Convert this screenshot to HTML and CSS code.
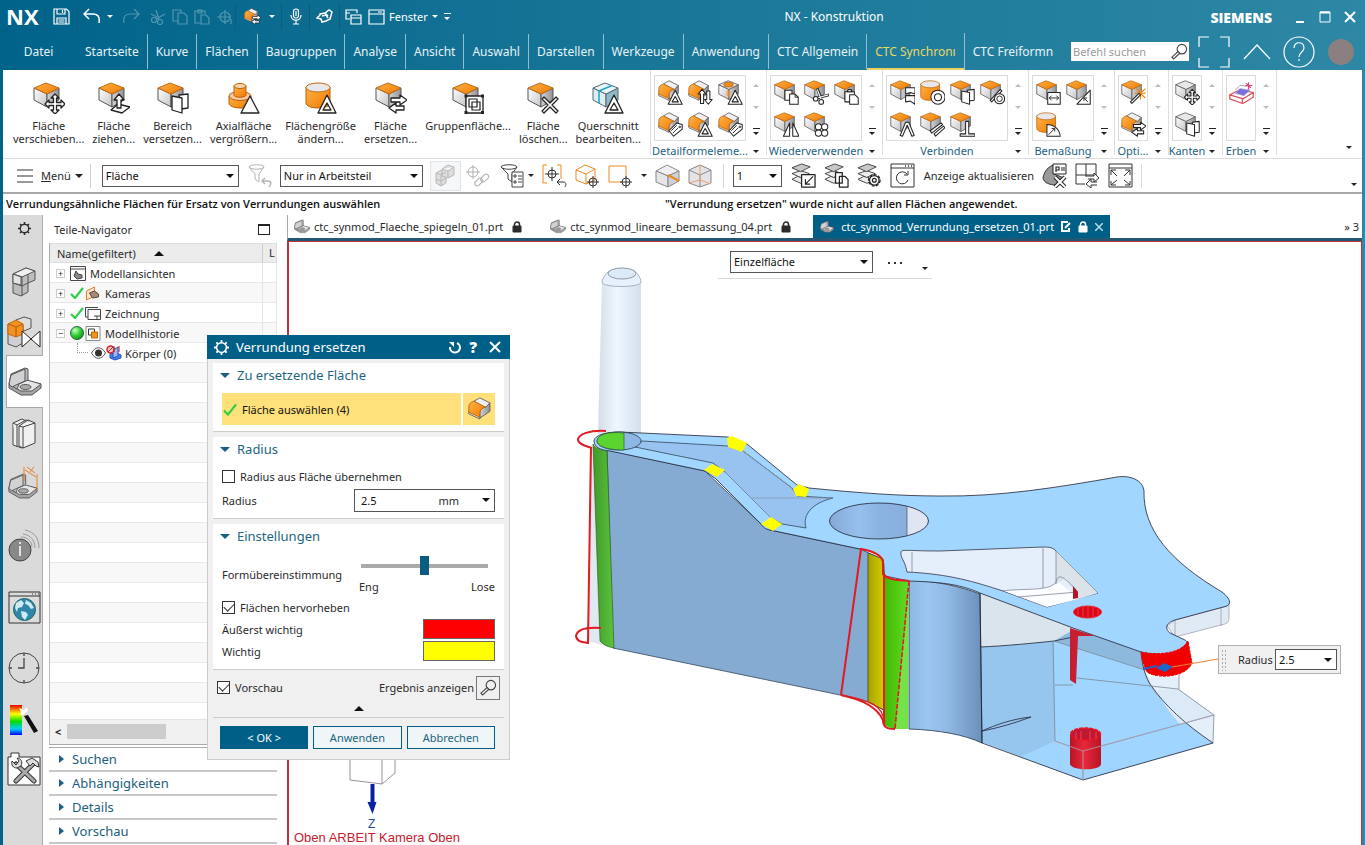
FILE: index.html
```html
<!DOCTYPE html>
<html lang="de">
<head>
<meta charset="utf-8">
<title>NX - Konstruktion</title>
<link rel="stylesheet" href="styles.css">
</head>
<body>
<svg class="defs" width="0" height="0" aria-hidden="true">
  <defs>
    <linearGradient id="gOr" x1="0" y1="0" x2="1" y2="1"><stop offset="0" stop-color="#ffb347"/><stop offset="1" stop-color="#f07800"/></linearGradient>
    <linearGradient id="gGr" x1="0" y1="0" x2="1" y2="1"><stop offset="0" stop-color="#fff"/><stop offset="1" stop-color="#c4c4c8"/></linearGradient>
    <linearGradient id="gDk" x1="0" y1="0" x2="1" y2="0"><stop offset="0" stop-color="#d4d4d8"/><stop offset="1" stop-color="#909096"/></linearGradient>
    <linearGradient id="gRain" x1="0" y1="0" x2="0" y2="1"><stop offset="0" stop-color="#e00"/><stop offset=".3" stop-color="#ff0"/><stop offset=".55" stop-color="#0d0"/><stop offset=".8" stop-color="#0cf"/><stop offset="1" stop-color="#00f"/></linearGradient>
    <radialGradient id="gBall" cx=".35" cy=".3" r=".8"><stop offset="0" stop-color="#c8ffc8"/><stop offset=".5" stop-color="#35d035"/><stop offset="1" stop-color="#0a8a10"/></radialGradient>
    <linearGradient id="mPil" x1="0" y1="0" x2="1" y2="0"><stop offset="0" stop-color="#d5dee8"/><stop offset=".45" stop-color="#eef6ff"/><stop offset="1" stop-color="#d3dfec"/></linearGradient>
    <linearGradient id="mCol" x1="0" y1="0" x2="1" y2="0"><stop offset="0" stop-color="#8cb8e6"/><stop offset=".25" stop-color="#9bc6f0"/><stop offset=".5" stop-color="#92bbe6"/><stop offset="1" stop-color="#6a90ba"/></linearGradient>
    <linearGradient id="mHole" x1="0" y1="0" x2="1" y2="0"><stop offset="0" stop-color="#86a9d6"/><stop offset=".3" stop-color="#97c0ee"/><stop offset=".5" stop-color="#8bb3e2"/><stop offset="1" stop-color="#86aad8"/></linearGradient>
    <linearGradient id="mGrn" x1="0" y1="0" x2="1" y2="0"><stop offset="0" stop-color="#3f9a2a"/><stop offset="1" stop-color="#5cc43c"/></linearGradient>
    <linearGradient id="mGr2" x1="0" y1="0" x2="1" y2="0"><stop offset="0" stop-color="#42b800"/><stop offset="1" stop-color="#62dc28"/></linearGradient>
    <linearGradient id="mYel" x1="0" y1="0" x2="1" y2="0"><stop offset="0" stop-color="#a8a200"/><stop offset="1" stop-color="#d0cc00"/></linearGradient>
    <linearGradient id="mRed" x1="0" y1="0" x2="1" y2="0"><stop offset="0" stop-color="#b81426"/><stop offset=".45" stop-color="#e8283a"/><stop offset="1" stop-color="#b81426"/></linearGradient>
  </defs>
  <symbol id="cube" viewBox="0 0 32 32"><g stroke="#555" stroke-linejoin="round"><path d="M1 6v12l13 7V12z" fill="url(#gGr)"/><path d="M14 12v13l12-7V6z" fill="url(#gDk)"/><path d="M1 6l12-5 13 5-12 6z" fill="url(#gOr)" stroke="#c26a10"/></g></symbol>
  <symbol id="cubeg" viewBox="0 0 32 32"><g stroke="#555" stroke-linejoin="round"><path d="M1 6v12l13 7V12z" fill="url(#gGr)"/><path d="M14 12v13l12-7V6z" fill="url(#gDk)"/><path d="M1 6l12-5 13 5-12 6z" fill="#e8e8ea"/></g></symbol>
  <symbol id="cubet" viewBox="0 0 32 32"><g stroke="#567" stroke-linejoin="round"><path d="M1 6v12l13 7V12z" fill="#dceef2"/><path d="M14 12v13l12-7V6z" fill="#8fb9c4"/><path d="M1 6l12-5 13 5-12 6z" fill="#e8f4f6"/><path d="M7 9l13-5.500M7 9v12" stroke="#1ba6c9" fill="none" stroke-width="1.500"/></g></symbol>
  <symbol id="blend" viewBox="0 0 32 32"><g stroke="#555" stroke-linejoin="round"><path d="M7 5l7-4 12 6-5 6z" fill="#f0f0f2"/><path d="M14 25v-6c0-4 3-7 7-7l5-5v10z" fill="url(#gDk)"/><path d="M1 17v3l13 6v-4z" fill="#eee"/><path d="M1 18v-6c0-4 2-6 6-7l14 7c-5 1-7 4-7 8v4z" fill="url(#gOr)" stroke="#b8620c"/></g></symbol>
  <symbol id="cubehole" viewBox="0 0 32 32"><use href="#cubeg"/><ellipse cx="13.500" cy="6" rx="6" ry="3" fill="#f58a1c" stroke="#b8620c"/><path d="M11 13l5 1v9l-5-3z" fill="#f58a1c" opacity=".6"/></symbol>
  <symbol id="cyl" viewBox="0 0 32 32"><path d="M1 5v16c0 3 5 5 12 5s12-2 12-5V5z" fill="url(#gOr)" stroke="#b8620c"/><ellipse cx="13" cy="5.500" rx="12" ry="4.500" fill="#e8e8ec" stroke="#c26a10"/></symbol>
  <symbol id="stack" viewBox="0 0 32 32"><path d="M1 14v7c0 3 5 5 11 5s11-2 11-5v-7z" fill="url(#gOr)" stroke="#b8620c"/><ellipse cx="12" cy="14" rx="11" ry="4.500" fill="#f6c7a0" stroke="#b8620c"/><path d="M6 4v9c0 3 12 3 12 0V4z" fill="url(#gOr)" stroke="#b8620c"/><ellipse cx="12" cy="4" rx="6" ry="2.500" fill="#fbd3a8" stroke="#b8620c"/></symbol>

  <symbol id="o-move" viewBox="0 0 32 32"><path d="M22 12l4 4h-2.500v4.500H28V18l4 4-4 4v-2.500h-4.500V28H26l-4 4-4-4h2.500v-4.500H16V26l-4-4 4-4v2.500h4.500V16H18z" class="ov"/></symbol>
  <symbol id="o-up" viewBox="0 0 32 32"><path d="M13 28l7-6 12 3-8 6z" class="ov"/><path d="M21 12l5 6h-3v8h-4v-8h-3z" class="ov"/></symbol>
  <symbol id="o-pages" viewBox="0 0 32 32"><path d="M22 13l9-1v14l-7 1z" class="ov"/><path d="M15 14l10 2v15l-10-3z" class="ov"/></symbol>
  <symbol id="o-tri" viewBox="0 0 32 32"><path d="M22 14l9 17H13z" class="ov"/></symbol>
  <symbol id="o-tri2" viewBox="0 0 32 32"><path d="M22 13l9 18H13zM22 21l-4 7h8z" class="ov"/></symbol>
  <symbol id="o-swap" viewBox="0 0 32 32"><path d="M16 16h9v-3l7 5-7 5v-3h-9z" class="ov"/><path d="M29 24h-8v-3l-7 5 7 5v-3h8z" class="ov"/></symbol>
  <symbol id="o-group" viewBox="0 0 32 32"><path d="M14 14h17v17H14z" class="ov"/><path d="M17 17h8v8h-8zM20 20h8v8h-8z" class="ol"/><path d="M12.500 12.500h3v3h-3zM29 12.500h3v3h-3zM12.500 29h3v3h-3zM29 29h3v3h-3z" fill="#222"/></symbol>
  <symbol id="o-x" viewBox="0 0 32 32"><path d="M17 15l6 6 6-6 2 2-6 6 6 6-2 2-6-6-6 6-2-2 6-6-6-6z" class="ov"/></symbol>
  <symbol id="o-updn" viewBox="0 0 32 32"><path d="M18 12l5 6h-3v12h-4V18h-3z" class="ov"/><path d="M26 31l-5-6h3V14h4v11h3z" class="ov"/></symbol>
  <symbol id="o-tag" viewBox="0 0 32 32"><path d="M14 24l10-10 7 2v6L20 31z" class="ov"/><path d="M19 27l7-7M17 24l7-7" class="ol"/><circle cx="28" cy="19" r="1" class="ol"/></symbol>
  <symbol id="o-copy" viewBox="0 0 32 32"><path d="M14 13h9v13h-9z" class="ov"/><path d="M20 18h7l4 4v9H20z" class="ov"/><path d="M27 18v4h4" class="ol"/></symbol>
  <symbol id="o-paste" viewBox="0 0 32 32"><path d="M14 15h12v13H14z" class="ov"/><path d="M17 15c0-4 6-4 6 0z" class="ov"/><path d="M20 19h7l4 4v8H20z" class="ov"/></symbol>
  <symbol id="o-cut" viewBox="0 0 32 32"><path d="M17 11l5 13M32 19l-15 4" stroke="#222" stroke-width="3.500"/><path d="M17 12l5 13M31 19l-14 4" stroke="#fff" stroke-width="1.500"/><circle cx="22" cy="28" r="3" class="ov"/><circle cx="15" cy="24" r="3" class="ov"/></symbol>
  <symbol id="o-mirror" viewBox="0 0 32 32"><path d="M20 14v17h-8zM24 14v17h8z" class="ov"/></symbol>
  <symbol id="o-flower" viewBox="0 0 32 32"><circle cx="18.500" cy="19" r="4" class="ov"/><circle cx="26.500" cy="19" r="4" class="ov"/><circle cx="18.500" cy="27" r="4" class="ov"/><circle cx="26.500" cy="27" r="4" class="ov"/></symbol>
  <symbol id="o-books" viewBox="0 0 32 32"><path d="M20 10h12v8l-6-2-6 2zM20 20h12v11l-6-4-6 1z" class="ov"/></symbol>
  <symbol id="o-ring" viewBox="0 0 32 32"><circle cx="23" cy="22" r="9" class="ov"/><circle cx="23" cy="22" r="4.500" class="ov"/></symbol>
  <symbol id="o-tan" viewBox="0 0 32 32"><path d="M13 26l13-14 2 2-13 14z" class="ov"/><circle cx="25" cy="24" r="6.500" class="ov"/><circle cx="25" cy="24" r="3.500" class="ol"/></symbol>
  <symbol id="o-ang" viewBox="0 0 32 32"><path d="M20 13h4l7 17-3 1-6-14-6 14-3-1z" class="ov"/></symbol>
  <symbol id="o-par" viewBox="0 0 32 32"><path d="M13 24l14-10 2 2-14 11zM18 28l12-10 2 2-12 11z" class="ov"/></symbol>
  <symbol id="o-perp" viewBox="0 0 32 32"><path d="M20 12h4v16h8v3H13v-3h7z" class="ov"/></symbol>
  <symbol id="o-dim" viewBox="0 0 32 32"><path d="M15 16h16v15H15z" class="ov"/><path d="M17 23h12M20 20l-3 3 3 3M26 20l3 3-3 3" class="ol"/></symbol>
  <symbol id="o-dimt" viewBox="0 0 32 32"><path d="M31 13v18H14z" class="ov"/><path d="M28 28l-5-5m0 4v-4h4" class="ol"/></symbol>
  <symbol id="o-dimr" viewBox="0 0 32 32"><path d="M14 31V16c9 0 16 6 17 15z" class="ov"/><path d="M16 29l8-8m-4 0h4v4" class="ol"/></symbol>
  <symbol id="o-wand" viewBox="0 0 32 32"><path d="M25 9v16M17 17h16M19 11l12 12M31 11L19 23" stroke="#f08a10" stroke-width="1.500"/><path d="M12 28l11-11 2 2-11 11z" class="ov"/></symbol>

  <symbol id="stackl" viewBox="0 0 26 26"><g stroke="#444" fill="#ececee" stroke-linejoin="round"><path d="M1 17l6-3 10 2 2 2-9 3z"/><path d="M1 11l9-3 9 3-9 4z"/><path d="M1 5l10-4 9 3-10 5z" fill="#c8c8cc"/></g></symbol>
  <symbol id="bracket" viewBox="0 0 34 30"><g stroke="#555" stroke-linejoin="round"><path d="M1 17v4l12 7h11l9-7v-4l-14-3z" fill="#a4a4a8"/><path d="M1 17l18-4 14 4-9 7H13z" fill="#e6e6e8"/><path d="M1 17l2-10L17 1l3 1v11l-9 4-2 5z" fill="#bcbcc0"/><path d="M3 8L17 2v12L8 18l-4 2-3-3z" fill="#d2d2d5"/><ellipse cx="17.500" cy="20" rx="5.500" ry="2.500" fill="#aaa"/></g></symbol>
  <symbol id="lock" viewBox="0 0 10 12"><path d="M1 5h8v6H1z" fill="currentColor" stroke="currentColor"/><path d="M2.500 5V3.500a2.500 2.500 0 0 1 5 0V5" fill="none" stroke="currentColor" stroke-width="1.500"/></symbol>
  <symbol id="check" viewBox="0 0 14 12"><path d="M1 7l4 4L13 1" fill="none" stroke="#2fcf4a" stroke-width="2.200"/></symbol>
  <symbol id="lens" viewBox="0 0 18 18"><circle cx="11.500" cy="6.500" r="5" fill="none" stroke="#444" stroke-width="1.200"/><path d="M7.500 9l1.800 1.800-6.500 6L1 15z" fill="#fff" stroke="#444" stroke-width="1.200"/></symbol>
  <symbol id="gear" viewBox="0 0 16 16"><circle cx="8" cy="8" r="5.200" fill="none" stroke="currentColor" stroke-width="1.600"/><path d="M8 0v3M8 13v3M0 8h3M13 8h3M2.500 2.500l2 2M11.500 11.500l2 2M2.500 13.500l2-2M11.500 4.500l2-2" stroke="currentColor" stroke-width="2"/></symbol>
</svg>

<div class="app">
  <header class="title-bar">
    <div class="quick">
      <span class="nx">NX</span>
      <button class="qb q-save" aria-label="Speichern"><svg width="17" height="17" viewBox="0 0 17 17" class="wl"><path d="M1 1h12.500L16 3.500V16H1zM4 1v5h8V1M9.500 2v3M4 16v-6h9v6M5.500 12h6M5.500 14h6"/></svg></button>
      <button class="qb q-undo" aria-label="Rückgängig"><svg width="18" height="17" viewBox="0 0 18 17" class="wl b"><path d="M6 1L1 6l5 5M1 6h9c5 0 7 3 6 9"/></svg></button><i class="tri w"></i>
      <button class="qb q-redo dim" aria-label="Wiederholen"><svg width="17" height="17" viewBox="0 0 17 17" class="wl"><path d="M11 1l5 5-5 5M16 6H7c-5 0-7 3-6 9"/></svg></button>
      <button class="qb q-c dim" aria-label="Ausschneiden"><svg width="16" height="16" viewBox="0 0 16 16" class="wl"><circle cx="4" cy="11" r="2.500"/><circle cx="10" cy="13" r="2.500"/><path d="M6 10l9-5M9 11L6 1M1 5l6 3"/></svg></button>
      <button class="qb q-c dim" aria-label="Kopieren"><svg width="16" height="16" viewBox="0 0 16 16" class="wl"><path d="M6 12H1V1h8v3M6 4h6l3 3v8H6z"/></svg></button>
      <button class="qb q-c dim" aria-label="Einfügen"><svg width="16" height="16" viewBox="0 0 16 16" class="wl"><path d="M6 14H1V2h10v3M4 1h4v3H4zM7 6h5l3 3v6H7z"/></svg></button>
      <button class="qb q-c dim" aria-label="Ziel"><svg width="16" height="16" viewBox="0 0 16 16" class="wl"><circle cx="9" cy="8" r="5"/><path d="M9 1v14M1 8h14M15 15v-5"/></svg></button>
      <button class="qb q-rep" aria-label="Fläche ersetzen"><svg width="17" height="17"><use href="#blend"/><use href="#o-swap"/></svg></button><i class="tri w"></i>
      <button class="qb q-mic" aria-label="Mikrofon"><svg width="12" height="17" viewBox="0 0 12 17" class="wl"><rect x="3.500" y="1" width="5" height="9" rx="2.500"/><path d="M1 7c0 7 10 7 10 0M6 12.500V16M3 16h6M6 3v5"/></svg></button>
      <button class="qb q-pen" aria-label="Touch"><svg width="17" height="15" viewBox="0 0 17 15" class="wl b"><path d="M4 5l5-1 4-3 3 2-2 7-4 2-4 1-1-3-4-1 3-3zM6 7l4-1 2 3M9 4l3 3"/></svg></button>
      <button class="qb q-win" aria-label="Fenster wechseln"><svg width="17" height="16" viewBox="0 0 17 16" class="wl"><path d="M5 10H1V1h11v3M1 4h4M6 6h10v9H6zM6 9h10"/></svg></button>
      <button class="qb q-fen"><svg width="17" height="16" viewBox="0 0 17 16" class="wl"><path d="M1 1h15v14H1zM1 5h15M10 3h4"/></svg>Fenster<i class="tri w"></i></button>
      <button class="qb q-more" aria-label="Mehr"><i class="more w"></i></button>
    </div>
    <h1 class="app-title">NX - Konstruktion</h1>
    <span class="siemens">SIEMENS</span>
    <div class="win">
      <button aria-label="Minimieren"><svg width="12" height="14" viewBox="0 0 12 14"><path d="M2 12h8" stroke="#fff" stroke-width="2"/></svg></button>
      <button aria-label="Maximieren"><svg width="12" height="12" viewBox="0 0 12 12"><path d="M1 1h10v10H1z" fill="none" stroke="#fff"/><path d="M1 1.500h10" stroke="#fff" stroke-width="2"/></svg></button>
      <button aria-label="Schließen"><svg width="12" height="12" viewBox="0 0 12 12"><path d="M1 1l10 10M11 1L1 11" stroke="#fff" stroke-width="2"/></svg></button>
    </div>
  </header>

  <nav class="tabs">
    <a class="tab first" href="#">Datei</a><a class="tab" href="#">Startseite</a><a class="tab" href="#">Kurve</a><a class="tab" href="#">Flächen</a><a class="tab" href="#">Baugruppen</a><a class="tab" href="#">Analyse</a><a class="tab" href="#">Ansicht</a><a class="tab" href="#">Auswahl</a><a class="tab" href="#">Darstellen</a><a class="tab" href="#">Werkzeuge</a><a class="tab" href="#">Anwendung</a><a class="tab" href="#">CTC Allgemein</a><a class="tab active" href="#">CTC Synchronı</a><a class="tab last" href="#">CTC Freiformn</a>
    <label class="search"><input type="text" placeholder="Befehl suchen" aria-label="Befehl suchen"><svg width="17" height="17"><use href="#lens"/></svg></label>
    <div class="tools">
      <button aria-label="Vollbild"><svg width="32" height="32" viewBox="0 0 32 32"><path d="M1 11V1h10M22 1h9v10M31 22v9h-9M11 31H1v-9" fill="none" stroke="#fff" stroke-width="1.200"/></svg></button>
      <button aria-label="Einklappen"><svg width="28" height="16" viewBox="0 0 28 16"><path d="M1 15L14 1l13 14" fill="none" stroke="#fff" stroke-width="1.200"/></svg></button>
      <button aria-label="Hilfe" class="help"><svg width="32" height="32" viewBox="0 0 32 32" fill="none" stroke="#fff" stroke-width="1.200"><circle cx="16" cy="16" r="15"/><path d="M11 12c0-7 10-7 10 0 0 4-5 4-5 9M16 23v2"/></svg></button>
      <button aria-label="Benutzer" class="user"></button>
    </div>
  </nav>

  <div class="sheet">
    <section class="ribbon">
      <div class="bigs">
        <button><svg width="32" height="32"><use href="#cube"/><use href="#o-move"/></svg>Fläche<br>verschieben...</button>
        <button><svg width="32" height="32"><use href="#cube"/><use href="#o-up"/></svg>Fläche<br>ziehen...</button>
        <button><svg width="32" height="32"><use href="#cube"/><use href="#o-pages"/></svg>Bereich<br>versetzen...</button>
        <button><svg width="32" height="32"><use href="#stack"/><use href="#o-tri"/></svg>Axialfläche<br>vergrößern...</button>
        <button><svg width="32" height="32"><use href="#cyl"/><use href="#o-tri2"/></svg>Flächengröße<br>ändern...</button>
        <button><svg width="32" height="32"><use href="#cube"/><use href="#o-swap"/></svg>Fläche<br>ersetzen...</button>
        <button><svg width="32" height="32"><use href="#cube"/><use href="#o-group"/></svg>Gruppenfläche...</button>
        <button><svg width="32" height="32"><use href="#cube"/><use href="#o-x"/></svg>Fläche<br>löschen...</button>
        <button><svg width="32" height="32"><use href="#cubet"/><use href="#o-tri2"/></svg>Querschnitt<br>bearbeiten...</button>
      </div>
      <div class="grp"><div class="gal c3"><svg><use href="#blend"/><use href="#o-tri2"/></svg><svg><use href="#blend"/><use href="#o-updn"/></svg><svg><use href="#cubehole"/><use href="#o-tri2"/></svg><svg><use href="#blend"/><use href="#o-tag"/></svg><svg><use href="#blend"/><use href="#o-tri2"/></svg><svg><use href="#blend"/><use href="#o-tag"/></svg></div><div class="scr"><i class="up"></i><i class="dn"></i><i class="more"></i></div><span class="gl">Detailformeleme...</span><i class="tri"></i></div>
      <div class="grp"><div class="gal c3"><svg><use href="#cube"/><use href="#o-copy"/></svg><svg><use href="#cube"/><use href="#o-cut"/></svg><svg><use href="#cube"/><use href="#o-paste"/></svg><svg><use href="#cube"/><use href="#o-mirror"/></svg><svg><use href="#cube"/><use href="#o-flower"/></svg></div><div class="scr"><i class="up"></i><i class="dn"></i><i class="more"></i></div><span class="gl">Wiederverwenden</span><i class="tri"></i></div>
      <div class="grp"><div class="gal c4"><svg><use href="#cube"/><use href="#o-books"/></svg><svg><use href="#cyl"/><use href="#o-ring"/></svg><svg><use href="#cube"/><use href="#o-pages"/></svg><svg><use href="#cube"/><use href="#o-tan"/></svg><svg><use href="#cube"/><use href="#o-ang"/></svg><svg><use href="#cube"/><use href="#o-par"/></svg><svg><use href="#cube"/><use href="#o-perp"/></svg></div><div class="scr"><i class="up"></i><i class="dn"></i><i class="more"></i></div><span class="gl">Verbinden</span><i class="tri"></i></div>
      <div class="grp"><div class="gal c2"><svg><use href="#cube"/><use href="#o-dim"/></svg><svg><use href="#cube"/><use href="#o-dimt"/></svg><svg><use href="#cyl"/><use href="#o-dimr"/></svg></div><div class="scr"><i class="up"></i><i class="dn"></i><i class="more"></i></div><span class="gl">Bemaßung</span><i class="tri"></i></div>
      <div class="grp"><div class="gal c1"><svg><use href="#cube"/><use href="#o-wand"/></svg><svg><use href="#blend"/><use href="#o-swap"/></svg></div><div class="scr"><i class="up"></i><i class="dn"></i><i class="more"></i></div><span class="gl">Opti...</span><i class="tri"></i></div>
      <div class="grp"><div class="gal c1"><svg><use href="#cubeg"/><use href="#o-move"/></svg><svg><use href="#cubeg"/><use href="#o-pages"/></svg></div><div class="scr"><i class="up"></i><i class="dn"></i><i class="more"></i></div><span class="gl">Kanten</span><i class="tri"></i></div>
      <div class="grp"><div class="gal c1"><svg viewBox="0 0 32 32"><path d="M1 19l12-6 18 3-13 8zM1 19v5l16 6V24M31 16v6l-13 8" fill="#fff" stroke="#e04858" stroke-width="1.500"/><path d="M8 17l6-6 13 2-8 7z" fill="#7870d8" stroke="#a8a4e0"/><path d="M8 13l6-6 10 1" fill="none" stroke="#888"/><path d="M25 3v9M21 7h9M22 4l6 6" stroke="#e04070" stroke-width="1.500"/></svg></div><div class="scr"><i class="up"></i><i class="dn"></i><i class="more"></i></div><span class="gl">Erben</span><i class="tri"></i></div>
      <i class="tri end"></i>
    </section>

    <section class="bar">
      <button class="menu"><svg width="16" height="14" viewBox="0 0 16 14"><path d="M0 1h16M0 7h16M0 13h16" stroke="#333"/></svg><span><u>M</u>enü</span><i class="tri"></i></button>
      <span class="sel w-a"><select aria-label="Typfilter"><option>Fläche</option></select></span>
      <button class="tb first" aria-label="Filter zurücksetzen"><svg width="24" height="24" viewBox="0 0 24 24" fill="none" stroke="#b4b4b4"><path d="M1 3c0-3 15-3 15 0L11 10v8l-4-3v-5zM1 3c2 3 13 3 15 0"/><path d="M17 14l-3 3 3 3M14 17h6c4 0 3 4 1 6" stroke-width="1.500"/></svg></button>
      <span class="sel w-b"><select aria-label="Auswahlbereich"><option>Nur in Arbeitsteil</option></select></span>
      <button class="tb pale" aria-label="Baugruppe"><svg width="20" height="24" viewBox="0 0 20 24" fill="#dedede" stroke="#b8b8b8"><path d="M1 9l6-3 4 2v11l-5 3-5-3z"/><path d="M7 5l6-4 6 2v8l-6 3-6-2zM1 9l5 2 5-3M6 11v11M7 5l6 2 6-4M13 7v7M1 15l5 2 5-3"/></svg></button>
      <button class="tb link" aria-label="Verknüpfung"><svg width="25" height="24" viewBox="0 0 25 24" fill="none" stroke="#b0b0b0"><circle cx="8" cy="8" r="5"/><path d="M8 1v14M1 8h14"/><rect x="9" y="16" width="9" height="5" rx="2.500" transform="rotate(-45 13 18)"/><rect x="15" y="12" width="9" height="5" rx="2.500" transform="rotate(-45 19 14)"/></svg></button>
      <button class="tb" aria-label="Filterliste"><svg width="24" height="24" viewBox="0 0 24 24" fill="#fff" stroke="#444"><path d="M1 3c0-3 16-3 16 0l-5 7v8l-4-3v-5zM1 3c2 3 14 3 16 0"/><path d="M12 8h11v15H12z"/><path d="M14 11h2v2h-2zM14 17h2v2h-2zM18 12h4M18 15h4M18 18h4"/></svg><i class="tri"></i></button>
      <button class="tb" aria-label="Auswahl zurück"><svg width="25" height="24" viewBox="0 0 25 24" fill="none" stroke="#333"><path d="M5 1H1v18h4M15 1h4v14" stroke="#f08a20"/><circle cx="10" cy="10" r="4"/><path d="M10 3v14M3 10h14"/><path d="M18 15l-3 3 3 3M15 18h6c4 0 3 3 2 5"/></svg></button>
      <button class="tb" aria-label="Volumenauswahl"><svg width="25" height="24" viewBox="0 0 25 24" fill="none"><path d="M1 6l9-5 10 4v11l-9 4-10-4zM1 6l10 4 9-5M11 10v10" stroke="#e88a20"/><circle cx="18" cy="18" r="4" stroke="#333"/><path d="M18 12v12M12 18h12" stroke="#333"/></svg></button>
      <button class="tb" aria-label="Rechteckauswahl"><svg width="25" height="24" viewBox="0 0 25 24" fill="none"><path d="M1 2h17v16H1z" stroke="#e88a20"/><circle cx="18" cy="18" r="4" fill="#fff" stroke="#333"/><path d="M18 12v12M12 18h12" stroke="#333"/></svg><i class="tri wide-l"></i></button>
      <button class="tb" aria-label="Kante"><svg width="25" height="24" viewBox="0 0 25 24" stroke="#888"><path d="M1 7l11-6 12 6-11 5z" fill="#f0f0f2"/><path d="M1 7v11l12 5V12z" fill="#e6e6ea"/><path d="M13 12v11l11-6V7z" fill="#d0d0d6"/><path d="M13 11l11 6" stroke="#e88a20" stroke-width="2"/></svg></button>
      <button class="tb" aria-label="Kante innen"><svg width="25" height="24" viewBox="0 0 25 24" stroke="#888"><path d="M1 6l11-5 11 5v13l-11 4-11-4z" fill="#e4e4e8"/><path d="M1 6l11 5 11-5M12 11v12" fill="none"/><path d="M12 1v15l11 4M12 16L1 19" fill="none" stroke="#e8a070"/></svg></button>
      <i class="vsep lead"></i>
      <span class="sel w-c"><select aria-label="Layer"><option>1</option></select></span>
      <button class="tb" aria-label="Layereinstellungen"><svg width="25" height="25" viewBox="0 0 26 26"><use href="#stackl"/><path d="M11 12h14v13H11z" class="ov"/><path d="M23 14l-8 8m0-5v5h5" class="ol"/></svg></button>
      <button class="tb" aria-label="Layer kopieren"><svg width="25" height="25" viewBox="0 0 26 26"><use href="#stackl"/><path d="M12 10h7v11h-7zM16 14h6l3 3v8h-9z" class="ov"/></svg></button>
      <button class="tb" aria-label="Layer konfigurieren"><svg width="25" height="25" viewBox="0 0 26 26"><use href="#stackl"/><circle cx="18" cy="18" r="6" class="ov" stroke-dasharray="3 1.500"/><circle cx="18" cy="18" r="5" class="ov"/><circle cx="18" cy="18" r="2" class="ov"/></svg></button>
      <button class="tb upd"><svg width="25" height="25" viewBox="0 0 25 25" fill="none" stroke="#333"><path d="M1 1h23v23H1zM1 5h23"/><path d="M15 3h1M18 3h1M21 3h1" stroke-width="1.500"/><path d="M17 11a6 6 0 1 0 1 6M18 8v4h-4"/></svg>Anzeige aktualisieren</button>
      <button class="tb" aria-label="Ausdruck löschen"><svg width="25" height="25" viewBox="0 0 25 25"><path d="M1 15c1-7 6-12 11-13v9l10 4-8 7c-6 0-12-2-13-7z" fill="#999" stroke="#333"/><path d="M11 1h13v10H11z" fill="#fff" stroke="#222"/><path d="M14 9V4h3v3h-3M19 5h4M19 7h4" class="ol"/><path d="M13 14l10 10M23 14L13 24" stroke="#222" stroke-width="4"/><path d="M13 14l10 10M23 14L13 24" stroke="#fff" stroke-width="2"/></svg></button>
      <button class="tb" aria-label="Layout"><svg width="25" height="25" viewBox="0 0 25 25" fill="none" stroke="#333"><path d="M11 1v13M1 12h20V1H1v20h9"/><path d="M11 13h8v-3l5 5-5 4v-3h-6M22 19h-6v-3l-5 5 5 4v-3h6" fill="#fff"/></svg></button>
      <button class="tb" aria-label="Einpassen"><svg width="25" height="25" viewBox="0 0 25 25" fill="none" stroke="#333"><path d="M1 1h23v23H1zM1 5h23M3 12V7h5M3 7l6 6M22 12V7h-5M22 7l-6 6M3 18v4h5M3 22l6-5M22 18v4h-5M22 22l-6-5"/></svg></button>
      <i class="vsep"></i>
      <i class="tri end"></i>
    </section>

    <div class="msg"><strong>Verrundungsähnliche Flächen für Ersatz von Verrundungen auswählen</strong><strong>"Verrundung ersetzen" wurde nicht auf allen Flächen angewendet.</strong></div>

    <main class="work">
      <aside class="res">
        <button class="h-40" aria-label="Einstellungen"><svg width="13" height="13"><use href="#gear"/></svg></button>
        <button class="h-53" aria-label="Baugruppen-Navigator"><svg width="24" height="30" viewBox="0 0 24 30" stroke="#555" stroke-linejoin="round"><path d="M1 7l13-6 9 3v9l-7 3v9l-7 4-8-3z" fill="#bdbdc0"/><path d="M1 7l13-6 9 3-13 6z" fill="#f0f0f0"/><path d="M1 7l9 3v19M1 16l9 3 6-3M16 7v9" fill="none"/><path d="M1 7l8 3v8l-8-2z" fill="#e4e4e6"/></svg></button>
        <button class="h-47" aria-label="Zwangsbedingungen"><svg width="34" height="32" viewBox="0 0 34 32" stroke="#555" stroke-linejoin="round"><path d="M9 4l8-3 7 2v9l-7 3z" fill="#ddd"/><path d="M1 8v20l8 3 7-4V9z" fill="#d0d0d3"/><path d="M1 8l8-4 7 4-7 3zM1 8v10l8 3V11zM9 11v10l7-3V8z" fill="#f59120" stroke="#c26a10"/><path d="M15 15v16l9-8 9 8V15l-9 8z" fill="#fff" stroke="#222"/></svg></button>
        <button class="h-53 on" aria-label="Teile-Navigator"><svg width="34" height="32"><use href="#bracket"/></svg></button>
        <button class="h-50" aria-label="Bibliothek"><svg width="24" height="32" viewBox="0 0 24 32" stroke="#444" fill="#f0f0f0" stroke-linejoin="round"><path d="M1 6l9-4 4 2v24l-4 3-9-3z"/><path d="M5 8l9-5 3 1M1 6l4 2v22M7 9l9-6 7 3v20l-12 5-4-2z"/><path d="M7 9l4 1v21M11 10l12-4" fill="none"/></svg></button>
        <button class="h-50" aria-label="PMI"><svg width="32" height="34" viewBox="0 0 32 34"><svg y="7" width="30" height="27"><use href="#bracket"/></svg><path d="M16 1v14M29 8v16M17 4l11 7M19 1l8 6M26 1l-4 5" stroke="#e8802a" fill="none"/></svg></button>
        <button class="h-76" aria-label="Info"><svg width="32" height="34" viewBox="0 0 32 34"><circle cx="12" cy="21" r="11" fill="#888" stroke="#444"/><path d="M12 17v10M12 13v2" stroke="#fff" stroke-width="1.500"/><path d="M15 5c8 1 12 7 12 14M17 1c10 2 14 9 14 18M13 8c6 0 11 4 11 10" fill="none" stroke="#999"/></svg></button>
        <button class="h-46" aria-label="Browser"><svg width="33" height="33" viewBox="0 0 33 33"><path d="M1 1h31v31H1z" fill="#dcdcdc" stroke="#333"/><path d="M1 5h31M24 3h1M27 3h1M30 3h1" stroke="#333"/><circle cx="16.500" cy="18.500" r="11" fill="#2f87a8" stroke="#266"/><path d="M8 12l5-3 3 3-2 4-4 1-1 4-2-4zM18 9l5 3 3 5-3 1-3-4-3-1zM13 20l5 1 2 3-3 5-3-3z" fill="#cfeaf4"/></svg></button>
        <button class="h-76" aria-label="Historie"><svg width="32" height="32" viewBox="0 0 32 32" fill="none" stroke="#444"><circle cx="16" cy="16" r="15"/><path d="M16 1v3M16 28v3M1 16h3M28 16h3M16 6v10h-6" stroke-width="1.300"/></svg></button>
        <button class="h-28" aria-label="Rollen"><svg width="30" height="32" viewBox="0 0 30 32"><path d="M1 1h12v30H1z" fill="url(#gRain)"/><path d="M15 12l4-1 10 16-4 2z" fill="#111"/><path d="M14 11l5-4-1-4-3 3-5-2 2 4-1 3z" fill="#fff"/></svg></button>
        <button class="h-70" aria-label="Werkzeuge"><svg width="34" height="34" viewBox="0 0 34 34"><path d="M1 5h3V1h8v4h21v28H1z" fill="#fff" stroke="#333"/><path d="M9 12l18 17M26 12L9 29" stroke="#333" stroke-width="5" stroke-linecap="round"/><path d="M9 12l18 17M26 12L9 29" stroke="#aaa" stroke-width="3" stroke-linecap="round"/><path d="M5 9l4 4 3-4-2-3c4 0 6 4 4 8l-4 2c-4 0-6-3-5-7zM19 9l6-3 6 4 1 5-3-1-3-3-3 3z" fill="#ddd" stroke="#333"/></svg></button>
      </aside>

      <section class="nav">
        <div class="nav-title">Teile-Navigator<button aria-label="Maximieren"></button></div>
        <div class="nav-head"><span>Name(gefiltert)<i class="tri upb"></i></span><b>L</b></div>
        <ul class="tree">
          <li><i class="pm">+</i><svg width="16" height="15" viewBox="0 0 16 15"><path d="M.5.500h15v14H.5zM.5 3h15" fill="#fff" stroke="#444"/><path d="M4 10l2-5 2 3 4 1v3l-5 1z" fill="#888" stroke="#444"/></svg>Modellansichten</li>
          <li><i class="pm">+</i><svg width="14" height="12"><use href="#check"/></svg><svg width="16" height="15" viewBox="0 0 15 15"><path d="M1 5l8-4v9l-8 4z" fill="#fbe3cc" stroke="#e08030"/><path d="M4 7l5-2 4 3v3l-6 1z" fill="#a98a78" stroke="#543"/></svg>Kameras</li>
          <li><i class="pm">+</i><svg width="14" height="12"><use href="#check"/></svg><svg width="16" height="13" viewBox="0 0 16 13" fill="#fff" stroke="#444"><path d="M.5 2V.500H13M.5 2v8H3M3 2.500h12.500v10H3zM9 9h6M12 9v3"/></svg>Zeichnung</li>
          <li><i class="pm">−</i><svg width="14" height="14" viewBox="0 0 14 14"><circle cx="7" cy="7" r="6.500" fill="url(#gBall)" stroke="#264"/></svg><svg width="16" height="15" viewBox="0 0 15 15"><path d="M.5.500h14v14H.5z" fill="#fff" stroke="#888"/><path d="M3 3h6v6H3z" fill="#fff" stroke="#333"/><path d="M6 6h6v6H6z" fill="#f59120" stroke="#b60"/></svg>Modellhistorie</li>
          <li class="sub"><i class="dots"></i><svg width="15" height="12" viewBox="0 0 15 12"><path d="M.5 6c4-7 10-7 14 0-4 7-10 7-14 0z" fill="#fff" stroke="#555"/><circle cx="7.500" cy="6" r="3.500" fill="#333"/></svg><svg width="16" height="16" viewBox="0 0 16 16"><path d="M4 9l5-2 6 3v3l-6 2-5-2z" fill="#4a7be0" stroke="#25c"/><path d="M7 5l5-3v9l-5 2z" fill="#9ab6f0" stroke="#25c"/><circle cx="4.500" cy="4.500" r="3.500" fill="#f4c4c4" stroke="#d22" stroke-width="1.500"/><path d="M2 7l5-5M8 1v6M13 1v6" stroke="#a22"/></svg>Körper (0)</li>
        </ul>
        <div class="hscroll"><span>&lt;</span><i></i></div>
        <div class="acc"><button>Suchen</button><button>Abhängigkeiten</button><button>Details</button><button>Vorschau</button></div>
      </section>

      <section class="gfx">
        <div class="files">
          <button class="ft"><svg width="16" height="15"><use href="#bracket"/></svg>ctc_synmod_Flaeche_spiegeln_01.prt<svg class="lk" width="10" height="12"><use href="#lock"/></svg></button>
          <button class="ft"><svg width="16" height="15"><use href="#bracket"/></svg>ctc_synmod_lineare_bemassung_04.prt<svg class="lk" width="10" height="12"><use href="#lock"/></svg></button>
          <button class="ft cur"><svg width="14" height="14"><use href="#bracket"/></svg>ctc_synmod_Verrundung_ersetzen_01.prt<svg width="10" height="11" viewBox="0 0 10 11"><path d="M7 1H1v9h7V7" fill="none" stroke="#fff" stroke-width="2"/><path d="M4 7l5-5" stroke="#fff" stroke-width="2"/></svg><svg width="10" height="12"><use href="#lock"/></svg><svg width="8" height="8" viewBox="0 0 8 8"><path d="M0 0l8 8M8 0L0 8" stroke="#b8dce8" stroke-width="1.500"/></svg></button>
          <span class="cnt">» 3</span>
        </div>
        <div class="view">
          <svg class="scene" viewBox="289 242 1072 603" preserveAspectRatio="xMinYMin slice" width="1072" height="603">
            <path d="M602 281L598 434H641V281z" fill="url(#mPil)"/>
            <path d="M602 282c0-4 6-11 8-11 4-3 20-3 24 0 2 0 7 7 7 11 0 6-39 6-39 0z" fill="#e6f1fc" stroke="#8b95a0" stroke-width=".7"/>
            <ellipse cx="622" cy="273.500" rx="14" ry="5.500" fill="#dce9f6" stroke="#7b8590" stroke-width=".8"/>
            <path d="M590 447L588 641 602 645 594 447z" fill="#e0e8f0"/>
            <path d="M980 593L1095 634 1141 652 1143 672 1000 690 980 660z" fill="#dae4ec"/>
            <path d="M980 647C1005 646 1035 643 1053 641L1078 635 1100 636 1141 652C1142 663 1144 671 1150 684 1165 706 1185 724 1213 743L1083 780 981 742z" fill="#96c5ee"/>
            <path d="M1054 641L1145 670C1144 678 1150 688 1157 696L1214 743 1083 780 1020 757 1055 741z" fill="#9fd5ff"/>
            <path d="M1054 641L1073 630 1100 636 1141 652 1144 669z" fill="#8db9df"/>
            <path d="M1144 670L1148 677H1179V689L1214 715 1213 743C1185 724 1165 706 1150 684z" fill="#e4effa"/>
            <path d="M1157 690L1178 689 1214 715 1180 724C1170 713 1163 704 1157 690z" fill="#dceaf7"/>
            <path d="M1167 626L1175 620 1227 606 1229 602V617C1229 622 1227 624 1221 625L1175 637z" fill="#e0eaf4" stroke="#889" stroke-width=".6"/>
            <path d="M1175 620v17M1221 608v18" stroke="#889" stroke-width=".6"/>
            <path d="M909 580C935 581 960 586 980 594L982 743C965 735 940 730 909 729z" fill="url(#mCol)" stroke="#234" stroke-width=".8"/>
            <path d="M607 450L705 471 762 525 770 530 860 549 884 560V710L868 702 840 695 613 648z" fill="#86abd3" stroke="#345" stroke-width=".8"/>
            <path d="M594 441C594 436 604 432 620 432L728 437 747 444 797 485 809 488C860 493 900 496 940 496 1000 497 1060 487 1117 477 1130 475 1143 480 1144 491 1143 530 1170 561 1222 592 1231 599 1231 604 1227 606L1175 620C1165 623 1165 629 1170 633L1185 640C1192 644 1180 653 1168 654 1157 655 1150 654 1141 652L1073 628 980 593C960 584 940 582 909 581L885 576C883 572 885 566 883 560 880 553 870 551 860 549L770 530C765 529 763 527 761 524L716 479 705 471 610 451C600 450 594 447 594 441z" fill="#a0d6ff" stroke="#223" stroke-width=".8"/>
            <path d="M635 447L642 441 728 446 743 451 792 488 797 496 833 498C812 503 802 515 806 528L782 524 771 518 725 472 713 463z" fill="#98c3f0" stroke="#234" stroke-width=".7"/>
            <path d="M725 472L771 518M743 451L792 488M752 498L833 498" stroke="#89a" stroke-width=".8"/>
            <ellipse cx="619" cy="441" rx="22" ry="9" fill="#8eb7e4" stroke="#234" stroke-width=".8"/>
            <path d="M624 433C605 431 597 436 597 441S607 450 624 450z" fill="#5bd42f" stroke="#252" stroke-width=".6"/>
            <path d="M593 444C595 448 600 450 607 451L614 648C608 647 603 645 600 641z" fill="url(#mGrn)" stroke="#252" stroke-width=".6"/>
            <path d="M727 438l5-2 15 7-5 9-14-5zM704 470l8-6 13 6-8 7zM793 489l6-5 10 5-3 8-10-1zM761 524l10-7 11 7-9 7z" fill="#ff0"/>
            <ellipse cx="879" cy="521" rx="49.500" ry="18" fill="url(#mHole)"/>
            <path d="M907 506C935 513 935 529 907 536z" fill="#dfe6f1"/>
            <ellipse cx="879" cy="521" rx="49.500" ry="18" fill="none" stroke="#223" stroke-width=".8"/><path d="M907 506v30" stroke="#456" stroke-width=".7"/>
            <path d="M901 552C902 549 908 551 940 551L1043 547C1050 547 1054 548 1056 551L1098 593 1047 607 1003 591C975 582 950 574 907 572 905 560 900 558 901 552z" fill="#e5effb" stroke="#334" stroke-width=".8"/>
            <path d="M1056 551L1098 593 1079 599 1066 578 1056 584z" fill="#dae2ea"/>
            <path d="M1004 591L1043 588 1060 583 1079 599 1047 607z" fill="#fbfdff"/>
            <path d="M1043 548v40M1056 551v33M912 552v20M1003 591C1020 588 1050 592 1056 582 1058 574 1062 574 1078 592M1018 597L1078 592" fill="none" stroke="#778" stroke-width=".7"/>
            <path d="M868 553L883 559 884 576V710L868 702z" fill="url(#mYel)" stroke="#332" stroke-width=".7"/>
            <path d="M884 576C890 579 900 580 909 581L908 729 892 729 884 725z" fill="#74e34a"/>
            <path d="M884 576C890 579 900 580 909 581L895 729 884 725z" fill="url(#mGr2)"/>
            <g fill="none" stroke="#e21a22" stroke-width="2"><path d="M606 431C590 430 578 434 578 440 579 445 586 446 592 448M591 447L588 642M601 628C586 627 577 630 576 636 577 642 582 642 589 643"/><path d="M841 695L861 549C872 551 882 555 883 562V574C888 580 899 580 909 581M841 695C865 700 878 709 883 720 883 728 888 729 895 729M884 576V725"/><path d="M841 695C870 700 884 706 884 722" stroke-width="1.200"/><path d="M909 581L895 729" stroke-dasharray="5 1.500" stroke-width="1.600"/></g>
            <path d="M980 593L982 743M980 647C1005 646 1035 643 1054 641L1078 636M982 743L1083 780 1213 743C1185 724 1165 706 1150 684 1143 672 1142 660 1141 652M982 731C995 725 1012 719 1031 717 1015 723 998 728 982 731" fill="none" stroke="#223" stroke-width=".8"/>
            <path d="M1053 641L1055 741 1083 751 1214 715 1178 689 1077 678M1054 641L1145 670H1157M1055 685H1073M1083 751V780M1179 674V689M1214 715L1213 743" fill="none" stroke="#7a8896" stroke-width=".8"/>
            <path d="M1070 628L1095 636 1078 636 1076 684 1070 680z" fill="#c71f32"/><path d="M1073 586L1078 592V598L1073 599z" fill="#b51428"/>
            <ellipse cx="1087.500" cy="612" rx="14" ry="6" fill="#d8081c" stroke="#e22" stroke-width="1"/><path d="M1078 608v7M1083 607v10M1088 606v11M1093 607v10M1098 609v6" stroke="#f44" stroke-width=".8"/>
            <path d="M1070 734V764C1071 771 1101 771 1101 764V734z" fill="url(#mRed)"/><ellipse cx="1085.500" cy="734" rx="15" ry="6" fill="#c01830" stroke="#f01020" stroke-width="1.500" stroke-dasharray="4 1"/><path d="M1076 732v7M1081 731v9M1090 731v9M1096 732v7" stroke="#ea4050"/><path d="M1055 741L1083 751 1214 715M1083 751V780" fill="none" stroke="#b0a4b4" stroke-width=".8"/>
            <path d="M1141 652C1155 655 1180 655 1188 641L1192 663C1186 678 1156 679 1147 672 1144 666 1142 660 1141 652z" fill="#f00000" stroke="#f00000" stroke-dasharray="3 1"/>
            <path d="M1143 669L1157 666" stroke="#2a5fb8" stroke-width="2"/><path d="M1156 668l8-5 9 4-8 5z" fill="#1e66c8"/><path d="M1172 667L1218 659" stroke="#e8843a" stroke-width="1.200"/>
            <path d="M350 755V780L382 784 395 773V755M382 755V784" fill="none" stroke="#9a8f9e"/>
            <path d="M370.500 784h4v18h2l-4 12-5-12h3z" fill="#0a22a0"/>
            <text x="368" y="828" class="ax">Z</text>
            <text x="294" y="842" class="cam">Oben ARBEIT Kamera Oben</text>
          </svg>
          <div class="float"><span class="sel w-d"><select aria-label="Flächenregel"><option>Einzelfläche</option></select></span><button aria-label="Mehr"><svg width="16" height="3" viewBox="0 0 16 3"><path d="M1 1h2v2H1zM7 1h2v2H7zM13 1h2v2h-2z" fill="#333"/></svg></button><i class="tri"></i></div>
          <div class="mini"><i class="grip"></i><label for="r2">Radius</label><span class="sel w-e"><input id="r2" type="text" value="2.5"></span></div>
        </div>
      </section>
    </main>
  </div>

  <form class="dlg" role="dialog" aria-label="Verrundung ersetzen">
    <div class="dh"><svg width="15" height="15"><use href="#gear"/></svg><h2>Verrundung ersetzen</h2><button type="button" aria-label="Zurücksetzen"><svg width="13" height="13" viewBox="0 0 13 13"><path d="M9 2a5 5 0 1 1-7 4" fill="none" stroke="#fff" stroke-width="2"/><path d="M1 1h5v5z" fill="#fff"/></svg></button><button type="button" aria-label="Hilfe" class="qm">?</button><button type="button" aria-label="Schließen"><svg width="12" height="12" viewBox="0 0 12 12"><path d="M1 1l10 10M11 1L1 11" stroke="#fff" stroke-width="2"/></svg></button></div>
    <fieldset class="s1"><h3>Zu ersetzende Fläche</h3>
      <div class="pick"><button type="button" class="p1"><svg width="14" height="13"><use href="#check"/></svg>Fläche auswählen (4)</button><button type="button" class="p2" aria-label="Verrundung"><svg width="27" height="27"><use href="#blend"/></svg></button></div>
    </fieldset>
    <fieldset class="s2"><h3>Radius</h3>
      <label class="ck"><input type="checkbox">Radius aus Fläche übernehmen</label>
      <div class="row"><label for="r1">Radius</label><span class="sel w-f"><input id="r1" type="text" value="2.5"><em>mm</em></span></div>
    </fieldset>
    <fieldset class="s3"><h3>Einstellungen</h3>
      <div class="row sl"><label for="rg">Formübereinstimmung</label><div class="slw"><input id="rg" type="range" value="50"><div class="ends"><span>Eng</span><span>Lose</span></div></div></div>
      <label class="ck"><input type="checkbox" checked>Flächen hervorheben</label>
      <div class="row c"><label for="b1">Äußerst wichtig</label><button id="b1" type="button" class="sw red"></button></div>
      <div class="row c"><label for="b2">Wichtig</label><button id="b2" type="button" class="sw yel"></button></div>
    </fieldset>
    <div class="prev"><label class="ck"><input type="checkbox" checked>Vorschau</label><label for="res" class="er">Ergebnis anzeigen</label><button id="res" type="button"><svg width="17" height="17"><use href="#lens"/></svg></button></div>
    <div class="fold"><i class="tri upb"></i></div>
    <div class="acts"><button type="button" class="ok">&lt; OK &gt;</button><button type="button">Anwenden</button><button type="button">Abbrechen</button></div>
  </form>
</div>
</body>
</html>
```

FILE: styles.css
```css
* { box-sizing: border-box; }
html, body { height: 100%; }
body { margin: 0; font: 11px/13px "Noto Sans", "Open Sans", sans-serif; color: #2a2a2a; overflow: hidden; }
button, input, select { font: inherit; color: inherit; margin: 0; }
button { padding: 0; border: 0; background: none; }
a { color: inherit; text-decoration: none; }
h1, h2, h3 { margin: 0; font-weight: 400; }
svg { flex: none; display: block; }
i { font-style: normal; }
.defs { position: absolute; }
.ov { fill: #fff; stroke: #222; stroke-width: 1.300px; stroke-linejoin: round; }
.ol { fill: none; stroke: #222; stroke-width: 1.200px; }
.wl { fill: none; stroke: #fff; stroke-width: 1.200px; }
.wl.b { stroke-width: 1.500px; }

.tri { flex: none; width: 0; height: 0; border: 4px solid transparent; border-top-color: #222; border-bottom: 0; }
.tri.w { border-width: 3px; border-bottom: 0; border-top-color: #fff; }
.tri.upb { border: 5px solid transparent; border-bottom-color: #111; border-top: 0; }
.more { width: 7px; height: 7px; border-top: 1px solid #222; display: flex; align-items: flex-end; }
.more::after { content: ""; border: 3px solid transparent; border-top-color: #222; border-bottom: 0; }
.more.w { border-color: #fff; }
.more.w::after { border-top-color: #fff; }

.app { position: relative; height: 100%; display: flex; flex-direction: column; background: linear-gradient(90deg, #00638a, #1a7798 50%, #2d87a5); }
.title-bar { height: 33px; display: flex; align-items: center; color: #fff; padding-right: 9px; }
.quick { display: flex; align-items: center; height: 33px; }
.nx { font: 700 22px/33px "Open Sans", sans-serif; width: 45px; padding-left: 6px; }
.qb { height: 26px; display: flex; align-items: center; justify-content: center; }
.dim { opacity: .3; }
.q-save { width: 33px; border: solid #125a78; border-width: 0 1px; }
.q-undo { width: 28px; }
.q-redo { width: 32px; }
.q-undo + .tri { margin: 0 2px 0 1px; }
.q-c { width: 22px; }
.q-rep { width: 34px; border-left: 1px solid #125a78; }
.q-rep + .tri { margin-right: 6px; }
.q-mic { width: 29px; border: solid #125a78; border-width: 0 1px; }
.q-pen { width: 29px; }
.q-win { width: 28px; border-left: 1px solid #125a78; }
.q-fen { gap: 4px; margin-left: 1px; }
.q-more { width: 20px; }
.app-title { flex: 1; text-align: center; font-size: 12px; }
.siemens { font: 800 14px/16px "Open Sans", sans-serif; margin: 3px 22px 0 0; }
.win { display: flex; gap: 13px; align-items: center; }

.tabs { height: 37px; display: flex; align-items: center; color: #e6f3f7; font-size: 12px; }
.tab { height: 35px; line-height: 35px; padding: 0 8px; border-right: 1px solid #8fc0d0; white-space: nowrap; }
.tab.first { width: 77px; padding: 0; text-align: center; border: 0; }
.tab.active { color: #e8d666; height: 37px; line-height: 37px; border-bottom: 2px solid #f0d060; }
.tab.last { border: 0; }
.search { display: flex; align-items: center; background: #fff; width: 118px; height: 19px; margin-left: auto; padding-right: 1px; }
.search input { flex: 1; min-width: 0; border: 0; outline: 0; padding: 0 2px; background: none; font-size: 11px; }
.search input::placeholder { color: #9a9a9a; }
.tools { display: flex; align-items: center; width: 176px; justify-content: space-between; padding: 0 11px 0 9px; }
.user { width: 26px; height: 26px; border-radius: 13px; background: #8c7f80; }

.sheet { flex: 1; min-height: 0; margin: 0 3px; background: #fff; display: flex; flex-direction: column; }
.ribbon { height: 89px; display: flex; border-bottom: 1px solid #dcdcdc; padding: 0 6px; }
.bigs { display: flex; padding: 12px 9px 0 4px; align-items: flex-start; width: 641px; justify-content: space-between; }
.bigs button { line-height: 13px; white-space: nowrap; text-align: center; }
.bigs svg { margin: 0 auto 5px; }
.grp { display: grid; grid-template-columns: auto 20px; grid-template-rows: 67px 18px; padding: 5px 0 0 3px; border-left: 1px solid #dedede; height: 85px; }
.grp:last-of-type { border-right: 1px solid #dedede; }
.gal { border: 1px solid #dcdcdc; display: grid; height: 66px; grid-auto-rows: 32px; grid-template-columns: repeat(3, 30px); place-items: center; }
.gal svg { width: 25px; height: 25px; }
.gal.c4 { grid-template-columns: repeat(4, 30px); }
.gal.c2 { grid-template-columns: repeat(2, 30px); }
.gal.c1 { grid-template-columns: 28px; }
.scr { display: flex; flex-direction: column; align-items: center; justify-content: space-between; padding: 9px 0 7px; }
.scr .up { border: 3px solid transparent; border-bottom-color: #bbb; border-top: 0; }
.scr .dn { border: 3px solid transparent; border-top-color: #bbb; border-bottom: 0; }
.gl { color: #1d607c; line-height: 18px; width: 0; min-width: 100%; white-space: nowrap; display: flex; justify-content: center; }
.grp > .tri { place-self: center; border-width: 3px; border-bottom: 0; }
.tri.end { margin: auto 4px 9px auto; border-width: 3px; border-bottom: 0; }
.bar .tri.end { margin: auto 5px 6px auto; }

.bar { height: 35px; display: flex; align-items: center; border-bottom: 2px solid #a8a8a8; padding: 0 0 0 14px; }
.menu { display: flex; align-items: center; gap: 8px; padding-right: 7px; height: 24px; border-right: 1px solid #d0d0d0; margin-right: 11px; }
.menu .tri { margin-left: -4px; }
.tb { display: flex; align-items: center; gap: 4px; margin: 0 8px 0 0; height: 26px; }
.tb .tri { border-width: 3px; border-bottom: 0; }
.tb .wide-l { margin-left: 4px; }
.tb.first { margin-left: 9px; }
.tb.pale { width: 31px; height: 30px; margin: 0 4px 0 7px; justify-content: center; background: #f6f7f9; border: 1px solid #e2e4e8; }
.tb.link { margin-right: 10px; }
.upd { gap: 9px; }
.vsep { width: 1px; height: 24px; background: #d8d8d8; margin: 0 9px 0 0; }
.vsep.lead { margin-left: 2px; }
.sel { position: relative; display: flex; height: 22px; border: 1px solid #555; background: #fff; flex: none; }
.sel select, .sel input { appearance: none; border: 0; outline: 0; background: none; width: 100%; min-width: 0; padding: 0 3px; line-height: 20px; color: #111; }
.sel::after { content: ""; position: absolute; right: 4px; top: 8px; border: 4px solid transparent; border-top-color: #111; border-bottom: 0; pointer-events: none; }
.w-a { width: 137px; }
.w-b { width: 143px; }
.w-c { width: 49px; margin-right: 9px; }
.w-d { width: 143px; }
.w-e { width: 62px; height: 21px; }
.w-f { width: 141px; height: 23px; }
.msg { height: 21px; display: flex; line-height: 20px; padding-left: 3px; flex: none; }
.msg strong { font: 600 11px/20px "Open Sans", sans-serif; width: 659px; white-space: nowrap; color: #111; }

.work { flex: 1; min-height: 0; display: flex; }
.res { width: 40px; background: #dadada; border-right: 1px solid #aaa; display: flex; flex-direction: column; padding-left: 3px; }
.res button { display: flex; align-items: center; justify-content: center; flex: none; }
.h-28 { height: 28px; }
.h-40 { height: 40px; padding-bottom: 14px; }
.h-46 { height: 46px; }
.h-47 { height: 47px; }
.h-50 { height: 50px; }
.h-53 { height: 53px; }
.h-70 { height: 70px; }
.h-76 { height: 76px; }
.res .on { background: #fff; border: 1px solid #aaa; border-right: 0; margin-right: -1px; }

.nav { width: 234px; margin-left: 6px; padding-right: 6px; display: flex; flex-direction: column; }
.nav-title { height: 28px; display: flex; align-items: center; justify-content: space-between; padding: 1px 7px 0 5px; }
.nav-title button { width: 12px; height: 11px; border: 1px solid #222; border-top-width: 2px; }
.nav-head { height: 20px; background: #ececec; border: 1px solid #ddd; border-left-color: #aaa; display: flex; align-items: center; }
.nav-head span { flex: 1; padding-left: 7px; display: flex; align-items: center; gap: 18px; }
.nav-head b { font-weight: 400; width: 14px; border-left: 1px solid #ccc; line-height: 18px; padding-left: 6px; overflow: hidden; }
.tree { flex: 1; min-height: 0; overflow: hidden; margin: 0; padding: 0; list-style: none; border: 1px solid #e4e4e4; border-top: 0; border-left-color: #bbb; background: linear-gradient(90deg, transparent 212px, #e6e6e6 212px, #e6e6e6 213px, transparent 213px), repeating-linear-gradient(#fff 0 19px, #e8e8e8 19px 20px, #f8f8f8 20px 39px, #e8e8e8 39px 40px); }
.tree li { height: 20px; display: flex; align-items: center; gap: 4px; padding-left: 6px; }
.tree li svg + svg { margin-left: -3px; }
.pm { width: 9px; height: 9px; border: 1px solid #ccc; background: #fff; font-size: 9px; line-height: 7px; text-align: center; margin-right: 1px; }
.tree .sub { padding-left: 26px; gap: 3px; }
.dots { width: 11px; height: 10px; border: dotted #999; border-width: 0 0 1px 1px; margin: -10px 0 0 1px; }
.hscroll { height: 24px; display: flex; align-items: center; background: #f1f1f1; border-left: 1px solid #bbb; padding: 0 0 2px 5px; }
.hscroll span { font-weight: 700; }
.hscroll i { margin-left: 6px; width: 99px; height: 15px; background: #cdcdcd; }
.acc { border-top: 4px double #aaa; }
.acc button { display: flex; align-items: center; gap: 8px; width: 100%; height: 24px; padding-left: 10px; border-bottom: 2px solid #c8c8c8; color: #1d607c; font-size: 13px; }
.acc button::before { content: ""; border: 4px solid transparent; border-left: 5px solid #1a6080; border-right: 0; }
.acc button:last-child { margin-bottom: 1px; }

.gfx { flex: 1; min-width: 0; margin-left: 4px; display: flex; flex-direction: column; }
.files { height: 26px; display: flex; border-bottom: 3px solid #245872; border-left: 1px solid #aaa; }
.ft { display: flex; align-items: center; gap: 4px; padding-left: 6px; white-space: nowrap; margin-right: 22px; }
.lk { margin-left: 5px; }
.ft.cur { margin: 0; background: #005f87; color: #fff; padding: 0 7px; gap: 7px; }
.cnt { margin: auto 3px auto auto; }
.view { position: relative; flex: 1; min-height: 0; overflow: hidden; border: solid #c23038; border-width: 1px 1px 0 2px; }
.scene { display: block; }
.cam { font: 13px "Liberation Sans", sans-serif; fill: #c8202c; }
.ax { font: 12px "Liberation Sans", sans-serif; fill: #2a4aa0; }
.float { position: absolute; left: 429px; top: 0; width: 214px; height: 37px; background: #fff; border-bottom: 1px solid #d8d8d8; display: flex; align-items: center; padding: 4px 0 0 12px; }
.float button { width: 43px; height: 28px; margin-right: 2px; display: grid; place-items: center; }
.float .tri { border-width: 3px; border-bottom: 0; margin: 12px 0 0 4px; }
.mini { position: absolute; left: 929px; top: 403px; width: 123px; height: 29px; background: #f0f0f0; border: 1px solid #b0b0b0; display: flex; align-items: center; padding-left: 2px; }
.grip { width: 7px; height: 22px; margin-right: 10px; background: radial-gradient(#aaa 1px, transparent 1px) 0 0 / 3px 4px; }
.mini .sel { margin-left: auto; margin-right: 3px; }

.dlg { position: absolute; left: 207px; top: 335px; width: 303px; background: #f0f0f0; border: 1px solid #ccc; border-top: 0; padding: 0 5px; }
.dh { height: 24px; margin: 0 -6px 4px; padding: 0 9px 0 7px; background: #005f87; color: #fff; display: flex; align-items: center; }
.dh h2 { font-size: 13px; line-height: 24px; margin-left: 7px; flex: 1; }
.dh button { margin-left: 8px; }
.dh .qm { font: 800 15px/20px "Open Sans", sans-serif; }
.dh button:last-child { margin-left: 12px; }
fieldset { border: 0; border-bottom: 1px solid #ccc; margin: 0 0 5px; padding: 0 9px; background: #fff; min-width: 0; }
h3 { font-size: 13px; line-height: 25px; color: #1d6580; display: flex; align-items: center; gap: 7px; margin-left: -2px; }
h3::before { content: ""; border: 5px solid transparent; border-top-color: #1a6080; border-bottom: 0; }
.s1 { height: 69px; }
.s2 { height: 82px; }
.s3 { height: 146px; }
.pick { display: flex; gap: 2px; margin-top: 5px; }
.pick button { background: #ffe07a; height: 32px; display: flex; align-items: center; }
.p1 { flex: 1; gap: 5px; padding-left: 1px; color: #111; }
.p2 { width: 32px; padding: 3px 0 0 5px; }
.ck { display: flex; align-items: center; gap: 5px; }
.ck input { appearance: none; width: 13px; height: 13px; border: 1px solid #333; background: #fff; display: grid; place-items: center; }
.ck input:checked::before { content: ""; width: 9px; height: 5px; border: solid #333; border-width: 0 0 1px 1px; rotate: -45deg; margin-top: -3px; }
.row { display: flex; align-items: center; justify-content: space-between; }
.s2 .ck { margin-top: 7px; height: 14px; }
.s2 .row { margin-top: 6px; }
.w-f em { font-style: normal; line-height: 21px; position: absolute; right: 35px; }
.w-f input { padding: 0 6px; }
.sl { margin-top: 5px; height: 40px; }
.slw { width: 136px; padding-right: 1px; }
.slw input { appearance: none; display: block; width: 127px; height: 19px; margin: 0 0 0 2px; background: linear-gradient(#aaa, #aaa) 0 8px / 100% 4px no-repeat; }
.slw input::-webkit-slider-thumb { appearance: none; width: 9px; height: 19px; background: #0a5d80; }
.ends { display: flex; justify-content: space-between; margin: 5px -1px 0 0; }
.s3 .ck { height: 16px; margin: 5px 0 3px; }
.row.c { height: 22px; }
.sw { width: 72px; height: 20px; border: 1px solid #666; }
.red { background: #f00; }
.yel { background: #ff0; }
.prev { display: flex; align-items: center; height: 25px; padding: 0 4px; }
.er { margin-left: auto; }
.prev button { width: 24px; height: 24px; border: 1px solid #777; display: grid; place-items: center; margin-left: 2px; }
.fold { height: 18px; border-bottom: 1px solid #ccc; display: grid; place-items: center; }
.acts { display: flex; gap: 5px; padding: 8px 9px 10px 7px; }
.acts button { flex: 1; height: 23px; border: 1px solid #005f87; color: #1d6580; background: #f0f5f7; }
.acts .ok { background: #005f87; color: #fff; }
```
